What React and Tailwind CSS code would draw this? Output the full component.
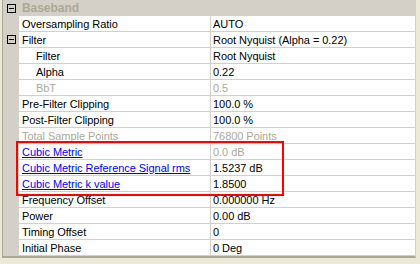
import React from "react";

const rows = [
  { name: "Oversampling Ratio", value: "AUTO" },
  { name: "Filter", value: "Root Nyquist (Alpha = 0.22)", box: true },
  { name: "Filter", value: "Root Nyquist", indent: true },
  { name: "Alpha", value: "0.22", indent: true },
  { name: "BbT", value: "0.5", indent: true, disabled: true },
  { name: "Pre-Filter Clipping", value: "100.0 %" },
  { name: "Post-Filter Clipping", value: "100.0 %" },
  { name: "Total Sample Points", value: "76800 Points", disabled: true },
  { name: "Cubic Metric", value: "0.0 dB", link: true, valueDisabled: true },
  { name: "Cubic Metric Reference Signal rms", value: "1.5237 dB", link: true },
  { name: "Cubic Metric k value", value: "1.8500", link: true },
  { name: "Frequency Offset", value: "0.000000 Hz" },
  { name: "Power", value: "0.00 dB" },
  { name: "Timing Offset", value: "0" },
  { name: "Initial Phase", value: "0 Deg" },
];

function MinusBox() {
  return (
    <div className="w-[9px] h-[9px] border border-[#000000] flex items-center justify-center bg-[#d4d0c8]">
      <div className="w-[5px] h-px bg-black" />
    </div>
  );
}

export default function App() {
  return (
    <div
      className="relative w-[420px] h-[264px] bg-[#ece9d8] overflow-hidden text-[11px] leading-[16px] tracking-[-0.05px]"
      style={{ fontFamily: '"Liberation Sans", Arial, sans-serif' }}
    >
      <div className="ml-[2px] w-[414px] border-l border-[#aca899] border-r border-r-[#d4d0c8] border-b-2 border-b-[#aca899] bg-[#d4d0c8] flex flex-col">
        <div className="h-[16px] flex items-center bg-[#d4d0c8]">
          <div className="w-[16px] flex justify-center pl-[1px]">
            <MinusBox />
          </div>
          <div className="pl-[3px] font-bold text-[12px] text-[#aca899]">Baseband</div>
        </div>
        {rows.map((r, i) => (
          <div key={i} className="h-[16px] flex">
            <div className="w-[16px] shrink-0 flex items-center justify-center pl-[1px] pb-px">
              {r.box && <MinusBox />}
            </div>
            <div className="flex-1 flex bg-white border-b border-[#d4d0c8]">
              <div
                className={
                  "w-[192px] shrink-0 border-r border-[#d4d0c8] whitespace-nowrap overflow-hidden " +
                  (r.indent ? "pl-[17px] " : "pl-[3px] ") +
                  (r.link
                    ? "text-[#0000ff] underline"
                    : r.disabled
                    ? "text-[#aca899]"
                    : "text-black")
                }
              >
                {r.name}
              </div>
              <div
                className={
                  "flex-1 pl-[2px] whitespace-nowrap " +
                  (r.disabled || r.valueDisabled ? "text-[#aca899]" : "text-black")
                }
              >
                {r.value}
              </div>
            </div>
          </div>
        ))}
      </div>
      <div className="absolute left-[16px] top-[141px] w-[268px] h-[55px] border-2 border-[#ff0000]" />
    </div>
  );
}
